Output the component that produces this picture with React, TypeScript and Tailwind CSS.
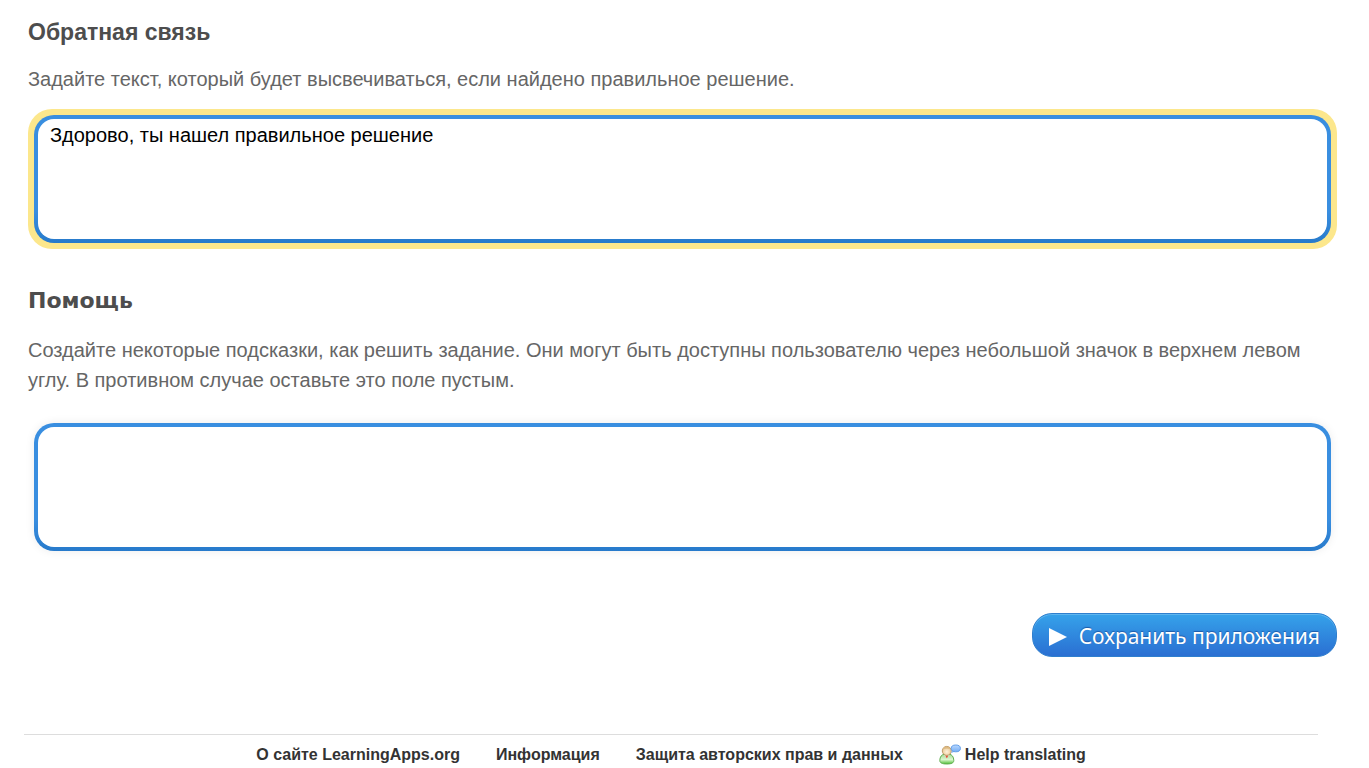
import { useState } from "react";

const links = ["О сайте LearningApps.org", "Информация", "Защита авторских прав и данных"];

function TranslateIcon() {
  return (
    <svg width="22" height="22" viewBox="0 0 22 22" className="shrink-0" aria-hidden="true">
      <defs>
        <linearGradient id="shirt" x1="0" y1="0" x2="0" y2="1">
          <stop offset="0" stopColor="#a6d996" />
          <stop offset="0.55" stopColor="#dcf6d0" />
          <stop offset="1" stopColor="#4fbf35" />
        </linearGradient>
        <radialGradient id="face" cx="0.5" cy="0.6" r="0.6">
          <stop offset="0" stopColor="#fff3dc" />
          <stop offset="1" stopColor="#e6c28c" />
        </radialGradient>
        <linearGradient id="bubble" x1="0" y1="0" x2="0" y2="1">
          <stop offset="0" stopColor="#b9d8ff" />
          <stop offset="1" stopColor="#74adf4" />
        </linearGradient>
      </defs>
      <path
        d="M.8 16.500c0-3.800 2-6 4.500-6.300h5c2.500.3 4.500 2.500 4.500 6.300 0 2.500-2.500 3.500-7 3.500s-7-1-7-3.500z"
        fill="url(#shirt)"
        stroke="#62b052"
      />
      <path d="M5 10.800l2.800 3.200 2.800-3.200z" fill="#fff" />
      <path d="M6.300 11.200h3l-.6 1.800-.9 1.200-.9-1.200z" fill="#e0503a" />
      <circle cx="7.800" cy="6.900" r="4.500" fill="url(#face)" stroke="#c09a66" />
      <path d="M3.800 5.500C4.500 3.500 6 2.600 7.800 2.600s3.300.9 4 2.900C9.800 4.300 6 4.300 3.800 5.500z" fill="#dcb981" />
      <path d="M13.500 6l-1.500 3.200 4-1.800z" fill="#86b8f6" />
      <ellipse cx="16.800" cy="4.400" rx="4.600" ry="3.400" fill="url(#bubble)" stroke="#649ee8" />
    </svg>
  );
}

function TextBox({
  id,
  value,
  onChange,
  highlighted = false,
}: {
  id: string;
  value: string;
  onChange: (value: string) => void;
  highlighted?: boolean;
}) {
  return (
    <div className={`rounded-3xl p-1.5 ${highlighted ? "bg-[#fce78c]" : "bg-white"}`}>
      <div
        className={`flex rounded-[20px] bg-linear-to-b from-[#398ee0] from-75% to-[#277acb] p-1 ${
          highlighted ? "" : "shadow-[0_0_10px_rgba(0,0,0,0.08)]"
        }`}
      >
        <textarea
          id={id}
          value={value}
          onChange={(e) => onChange(e.target.value)}
          className="h-30 w-full resize-none rounded-2xl bg-white px-3 py-1 text-[20px] leading-6 text-black outline-none"
        />
      </div>
    </div>
  );
}

export default function App() {
  const [feedback, setFeedback] = useState("Здорово, ты нашел правильное решение");
  const [help, setHelp] = useState("");

  return (
    <div className="min-h-screen bg-white font-['Liberation_Sans',Arial,sans-serif] text-[#666]">
      <main className="pt-4 pr-8 pl-7">
        <section>
          <h2 className="text-[23px] leading-8 font-bold text-[#4d4d4d]">
            <label htmlFor="feedback">Обратная связь</label>
          </h2>
          <p className="mt-4 mb-[15px] text-[20px] leading-[30px]">
            Задайте текст, который будет высвечиваться, если найдено правильное решение.
          </p>
          <TextBox id="feedback" value={feedback} onChange={setFeedback} highlighted />
        </section>

        <section className="mt-9">
          <h2 className="font-['DejaVu_Sans',Verdana,sans-serif] text-[22px] leading-8 font-bold text-[#4d4d4d]">
            <label htmlFor="help">Помощь</label>
          </h2>
          <p className="mt-[18px] mb-[22px] text-[20px] leading-[30px]">
            Создайте некоторые подсказки, как решить задание. Они могут быть доступны пользователю через небольшой
            значок в верхнем левом углу. В противном случае оставьте это поле пустым.
          </p>
          <TextBox id="help" value={help} onChange={setHelp} />
        </section>

        <div className="mt-14 flex justify-end">
          <button
            type="button"
            className="flex h-11 items-center gap-3 rounded-[20px] border border-[#2f7fce] bg-linear-to-b from-[#36a2ea] to-[#2b6fd2] px-4 pt-1 font-['Noto_Sans','Open_Sans',sans-serif] text-[21px] text-white shadow-[inset_0_1px_0_#5fb6ef] text-shadow-[0_-1px_1px_#1d5aa8]"
          >
            <svg width="18" height="20" viewBox="0 0 18 20" aria-hidden="true">
              <path d="M0 1v18l18-9z" fill="#fff" />
            </svg>
            Сохранить приложения
          </button>
        </div>
      </main>

      <footer className="mt-[77px] mr-[51px] ml-6 border-t border-[#ddd] pt-2">
        <nav className="flex items-center justify-center gap-9 text-base leading-6 font-bold text-[#333]">
          {links.map((link) => (
            <a key={link} href="#">
              {link}
            </a>
          ))}
          <a href="#" className="flex items-center gap-1">
            <TranslateIcon />
            Help translating
          </a>
        </nav>
      </footer>
    </div>
  );
}
